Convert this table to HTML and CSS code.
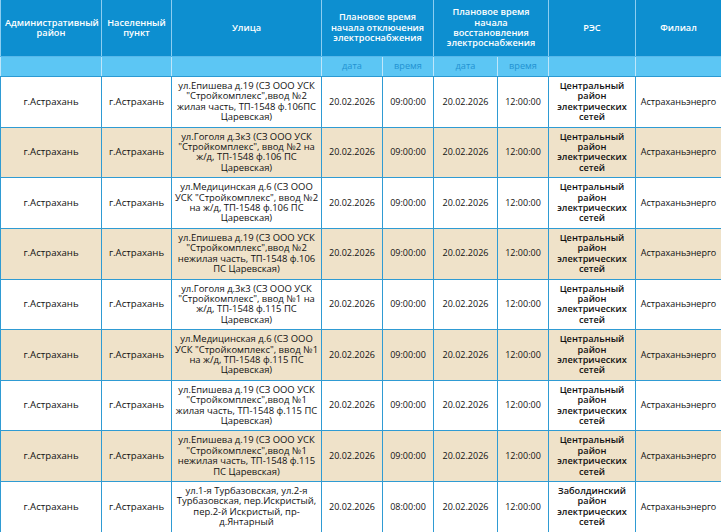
FILE: index.html
```html
<!DOCTYPE html>
<html lang="ru">
<head>
<meta charset="utf-8">
<title>Плановые отключения</title>
<link rel="stylesheet" href="styles.css">
</head>
<body>
<table class="grid">
  <colgroup>
    <col class="c1"><col class="c2"><col class="c3"><col class="c4"><col class="c5"><col class="c6"><col class="c7"><col class="c8"><col class="c9">
  </colgroup>
  <thead>
    <tr class="head">
      <th>Административный район</th>
      <th>Населенный пункт</th>
      <th>Улица</th>
      <th colspan="2">Плановое время начала отключения электроснабжения</th>
      <th colspan="2">Плановое время начала восстановления электроснабжения</th>
      <th>РЭС</th>
      <th>Филиал</th>
    </tr>
    <tr class="sub">
      <th></th><th></th><th></th>
      <th>дата</th><th>время</th><th>дата</th><th>время</th>
      <th></th><th></th>
    </tr>
  </thead>
  <tbody>
    <tr>
      <td class="city">г.Астрахань</td><td class="city">г.Астрахань</td>
      <td class="street">ул.Епишева д.19 (СЗ ООО УСК "Стройкомплекс",ввод №2 жилая часть, ТП-1548 ф.106ПС Царевская)</td>
      <td>20.02.2026</td><td>09:00:00</td><td>20.02.2026</td><td>12:00:00</td>
      <td class="res">Центральный район электрических сетей</td><td>Астраханьэнерго</td>
    </tr>
    <tr class="alt">
      <td class="city">г.Астрахань</td><td class="city">г.Астрахань</td>
      <td class="street">ул.Гоголя д.3к3 (СЗ ООО УСК "Стройкомплекс", ввод №2 на ж/д, ТП-1548 ф.106 ПС Царевская)</td>
      <td>20.02.2026</td><td>09:00:00</td><td>20.02.2026</td><td>12:00:00</td>
      <td class="res">Центральный район электрических сетей</td><td>Астраханьэнерго</td>
    </tr>
    <tr>
      <td class="city">г.Астрахань</td><td class="city">г.Астрахань</td>
      <td class="street">ул.Медицинская д.6 (СЗ ООО УСК "Стройкомплекс", ввод №2 на ж/д, ТП-1548 ф.106 ПС Царевская)</td>
      <td>20.02.2026</td><td>09:00:00</td><td>20.02.2026</td><td>12:00:00</td>
      <td class="res">Центральный район электрических сетей</td><td>Астраханьэнерго</td>
    </tr>
    <tr class="alt">
      <td class="city">г.Астрахань</td><td class="city">г.Астрахань</td>
      <td class="street">ул.Епишева д.19 (СЗ ООО УСК "Стройкомплекс",ввод №2 нежилая часть, ТП-1548 ф.106 ПС Царевская)</td>
      <td>20.02.2026</td><td>09:00:00</td><td>20.02.2026</td><td>12:00:00</td>
      <td class="res">Центральный район электрических сетей</td><td>Астраханьэнерго</td>
    </tr>
    <tr>
      <td class="city">г.Астрахань</td><td class="city">г.Астрахань</td>
      <td class="street">ул.Гоголя д.3к3 (СЗ ООО УСК "Стройкомплекс", ввод №1 на ж/д, ТП-1548 ф.115 ПС Царевская)</td>
      <td>20.02.2026</td><td>09:00:00</td><td>20.02.2026</td><td>12:00:00</td>
      <td class="res">Центральный район электрических сетей</td><td>Астраханьэнерго</td>
    </tr>
    <tr class="alt">
      <td class="city">г.Астрахань</td><td class="city">г.Астрахань</td>
      <td class="street">ул.Медицинская д.6 (СЗ ООО УСК "Стройкомплекс", ввод №1 на ж/д, ТП-1548 ф.115 ПС Царевская)</td>
      <td>20.02.2026</td><td>09:00:00</td><td>20.02.2026</td><td>12:00:00</td>
      <td class="res">Центральный район электрических сетей</td><td>Астраханьэнерго</td>
    </tr>
    <tr>
      <td class="city">г.Астрахань</td><td class="city">г.Астрахань</td>
      <td class="street">ул.Епишева д.19 (СЗ ООО УСК "Стройкомплекс",ввод №1 жилая часть, ТП-1548 ф.115 ПС Царевская)</td>
      <td>20.02.2026</td><td>09:00:00</td><td>20.02.2026</td><td>12:00:00</td>
      <td class="res">Центральный район электрических сетей</td><td>Астраханьэнерго</td>
    </tr>
    <tr class="alt">
      <td class="city">г.Астрахань</td><td class="city">г.Астрахань</td>
      <td class="street">ул.Епишева д.19 (СЗ ООО УСК "Стройкомплекс",ввод №1 нежилая часть, ТП-1548 ф.115 ПС Царевская)</td>
      <td>20.02.2026</td><td>09:00:00</td><td>20.02.2026</td><td>12:00:00</td>
      <td class="res">Центральный район электрических сетей</td><td>Астраханьэнерго</td>
    </tr>
    <tr>
      <td class="city">г.Астрахань</td><td class="city">г.Астрахань</td>
      <td class="street">ул.1-я Турбазовская, ул.2-я Турбазовская, пер.Искристый, пер.2-й Искристый, пр-д.Янтарный</td>
      <td>20.02.2026</td><td>08:00:00</td><td>20.02.2026</td><td>12:00:00</td>
      <td class="res">Заболдинский район электрических сетей</td><td>Астраханьэнерго</td>
    </tr>
  </tbody>
</table>
</body>
</html>
```

FILE: styles.css
```css
html, body {
  margin: 0;
  padding: 0;
  background: #ffffff;
}
body {
  font-family: "Open Sans", "Noto Sans", sans-serif;
  font-size: 9px;
  color: #111111;
  overflow: hidden;
}
.grid {
  width: 721px;
  table-layout: fixed;
  border-collapse: collapse;
}
.c1 { width: 101px; }
.c2 { width: 70px; }
.c3 { width: 150px; }
.c4 { width: 61px; }
.c5 { width: 51px; }
.c6 { width: 64px; }
.c7 { width: 51px; }
.c8 { width: 87px; }
.c9 { width: 86px; }

.grid th {
  font-weight: 600;
  font-size: 9.2px;
  line-height: 10.4px;
  text-align: center;
  vertical-align: middle;
  padding: 0 4px;
}
.head th {
  background: #0d8fd0;
  color: #ffffff;
  height: 56px;
  border-left: 1px solid #8ccdf0;
  border-right: 1px solid #8ccdf0;
  border-bottom: 1px solid #56b8ea;
}
.sub th {
  background: #5cc6f4;
  color: #2292d2;
  font-weight: 400;
  height: 19px;
  border: 1px solid #bfe6fa;
  border-bottom: 1px solid #2b9ad3;
}
.grid td {
  text-align: center;
  vertical-align: middle;
  line-height: 10.4px;
  padding: 4px 3px;
  height: 41px;
  border: 1px solid #2f9bd3;
}
.grid td.city {
  font-size: 9.6px;
}
.grid td.street {
  font-size: 9.45px;
  padding: 4px 2px;
}
.grid tr.alt td {
  background: #efe2c9;
}
.grid td.res {
  font-weight: 600;
  font-size: 9.2px;
}
```
